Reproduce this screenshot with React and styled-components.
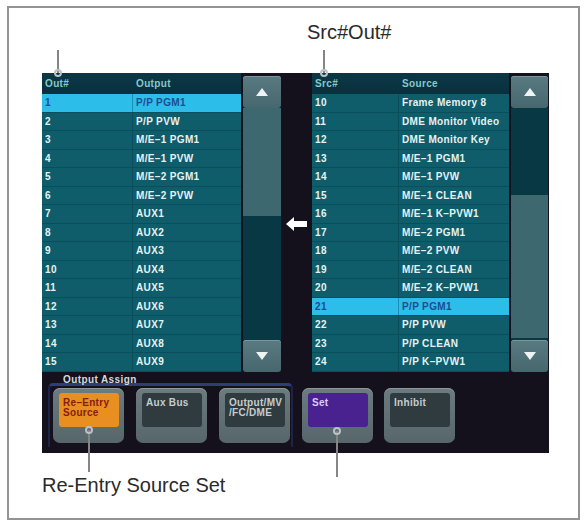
import React from "react";
import styled, { createGlobalStyle } from "styled-components";

const GlobalStyle = createGlobalStyle`
    body {
        margin: 0;
        background: #ffffff;
        font-family: "Liberation Sans", Arial, sans-serif;
    }
`;

const outputs = [
    ["1", "P/P PGM1"],
    ["2", "P/P PVW"],
    ["3", "M/E–1 PGM1"],
    ["4", "M/E–1 PVW"],
    ["5", "M/E–2 PGM1"],
    ["6", "M/E–2 PVW"],
    ["7", "AUX1"],
    ["8", "AUX2"],
    ["9", "AUX3"],
    ["10", "AUX4"],
    ["11", "AUX5"],
    ["12", "AUX6"],
    ["13", "AUX7"],
    ["14", "AUX8"],
    ["15", "AUX9"],
];

const sources = [
    ["10", "Frame Memory 8"],
    ["11", "DME Monitor Video"],
    ["12", "DME Monitor Key"],
    ["13", "M/E–1 PGM1"],
    ["14", "M/E–1 PVW"],
    ["15", "M/E–1 CLEAN"],
    ["16", "M/E–1 K–PVW1"],
    ["17", "M/E–2 PGM1"],
    ["18", "M/E–2 PVW"],
    ["19", "M/E–2 CLEAN"],
    ["20", "M/E–2 K–PVW1"],
    ["21", "P/P PGM1"],
    ["22", "P/P PVW"],
    ["23", "P/P CLEAN"],
    ["24", "P/P K–PVW1"],
];

const keyColors = {
    orange: { bg: "#e98f22", fg: "#861c0c" },
    gray: { bg: "#2f3b3e", fg: "#c4ccd0" },
    purple: { bg: "#4a2290", fg: "#dccdf6" },
};

const ListPanel = ({ head, rows, selected, numWidth, width }) => (
    <List $width={width}>
        <HeaderRow $numWidth={numWidth}>
            <Cell>{head[0]}</Cell>
            <Cell>{head[1]}</Cell>
        </HeaderRow>
        {rows.map(([num, name]) => (
            <Row key={num} $numWidth={numWidth} $selected={num === selected}>
                <Cell className="num">{num}</Cell>
                <Cell>{name}</Cell>
            </Row>
        ))}
    </List>
);

const ScrollBar = ({ width, thumbTop, thumbHeight }) => (
    <Scroll $width={width}>
        <ScrollButton>
            <Triangle />
        </ScrollButton>
        <Track>
            <Thumb $top={thumbTop} $height={thumbHeight} />
        </Track>
        <ScrollButton>
            <Triangle $down />
        </ScrollButton>
    </Scroll>
);

const Key = ({ color = "gray", children }) => (
    <KeyBody>
        <KeyFace $color={color}>{children}</KeyFace>
    </KeyBody>
);

const App = () => {
    return (
        <>
            <GlobalStyle />
            <Page>
                <Frame>
                    <TopCaption>Src#Out#</TopCaption>
                    <Screen>
                        <ListsRow>
                            <ListPanel
                                head={["Out#", "Output"]}
                                rows={outputs}
                                selected="1"
                                numWidth={91}
                                width={199}
                            />
                            <ScrollBar width={38} thumbTop={0} thumbHeight={108} />
                            <Middle>
                                <svg width="21" height="14" viewBox="0 0 21 14">
                                    <polygon
                                        points="0,7 8,0 8,4 21,4 21,10 8,10 8,14"
                                        fill="#ffffff"
                                    />
                                </svg>
                            </Middle>
                            <ListPanel
                                head={["Src#", "Source"]}
                                rows={sources}
                                selected="21"
                                numWidth={87}
                                width={197}
                            />
                            <ScrollBar width={37} thumbTop={87} thumbHeight={143} />
                        </ListsRow>
                        <ButtonRow>
                            <Group>
                                <GroupLabel>Output Assign</GroupLabel>
                                <GroupBox>
                                    <Key color="orange">
                                        Re–Entry
                                        <br />
                                        Source
                                    </Key>
                                    <Key>Aux Bus</Key>
                                    <Key>
                                        Output/MV
                                        <br />
                                        /FC/DME
                                    </Key>
                                </GroupBox>
                            </Group>
                            <SingleKey>
                                <Key color="purple">Set</Key>
                            </SingleKey>
                            <SingleKey>
                                <Key>Inhibit</Key>
                            </SingleKey>
                        </ButtonRow>
                    </Screen>
                    <BottomCaption>Re-Entry Source Set</BottomCaption>
                </Frame>

                <Leader $x={58} $y={50} $h={23} $ring="bottom" />
                <Leader $x={324} $y={50} $h={23} $ring="bottom" />
                <Leader $x={89} $y={430} $h={42} $ring="top" />
                <Leader $x={337} $y={431} $h={46} $ring="top" />
            </Page>
        </>
    );
};

export default App;

const Page = styled.div`
    position: relative;
    width: 584px;
    height: 528px;
    overflow: hidden;
    padding: 6px 0 0 7px;
    box-sizing: border-box;
`;

const Frame = styled.div`
    width: 573px;
    height: 514px;
    box-sizing: border-box;
    border: 2px solid #939393;
    padding: 13px 0 0 33px;
    background: #ffffff;
`;

const TopCaption = styled.div`
    margin-left: 265px;
    height: 23px;
    margin-bottom: 29px;
    font-size: 20px;
    line-height: 23px;
    color: #2a2a2a;
`;

const BottomCaption = styled.div`
    margin-top: 21px;
    font-size: 20px;
    line-height: 23px;
    color: #2a2a2a;
`;

const Screen = styled.div`
    width: 507px;
    height: 380px;
    background: #15111c;
    display: flex;
    flex-direction: column;
`;

const ListsRow = styled.div`
    display: flex;
    height: 299px;
`;

const List = styled.div`
    width: ${(p) => p.$width}px;
    margin-right: 2px;
    display: flex;
    flex-direction: column;
    font-weight: bold;
    font-size: 10px;
    letter-spacing: 0.35px;
`;

const HeaderRow = styled.div`
    display: grid;
    grid-template-columns: ${(p) => p.$numWidth}px 1fr;
    height: 21px;
    align-items: center;
    background: linear-gradient(#0c3846, #08303d);
    color: #86c9cb;
`;

const Row = styled.div`
    display: grid;
    grid-template-columns: ${(p) => p.$numWidth}px 1fr;
    height: 18.5px;
    box-sizing: border-box;
    align-items: center;
    border-bottom: 1px solid #0b4e5b;
    background: ${(p) => (p.$selected ? "#2dbde9" : "#0f5d6b")};
    color: ${(p) => (p.$selected ? "#1b4c92" : "#e6f2f2")};

    .num {
        border-right: 1px solid ${(p) => (p.$selected ? "#1d8fb4" : "#0b4d5a")};
    }
`;

const Cell = styled.span`
    padding-left: 3px;
    height: 100%;
    display: flex;
    align-items: center;
    white-space: nowrap;
`;

const Scroll = styled.div`
    width: ${(p) => p.$width}px;
    padding-top: 3px;
    display: flex;
    flex-direction: column;
`;

const ScrollButton = styled.div`
    height: 32px;
    border-radius: 3px;
    background: linear-gradient(#587a80, #46676e);
    box-shadow: inset 0 1px 0 #7a969b;
    display: flex;
    align-items: center;
    justify-content: center;
`;

const Triangle = styled.div`
    width: 0;
    height: 0;
    border-left: 6px solid transparent;
    border-right: 6px solid transparent;
    ${(p) =>
        p.$down
            ? "border-top: 8px solid #eef3f4;"
            : "border-bottom: 8px solid #eef3f4;"}
`;

const Track = styled.div`
    position: relative;
    flex: 1;
    background: #093845;
`;

const Thumb = styled.div`
    position: absolute;
    left: 0;
    right: 0;
    top: ${(p) => p.$top}px;
    height: ${(p) => p.$height}px;
    background: #3e6870;
`;

const Middle = styled.div`
    width: 31px;
    padding: 144px 0 0 5px;
    box-sizing: border-box;
`;

const ButtonRow = styled.div`
    display: flex;
    align-items: flex-start;
    padding-left: 6px;
    gap: 9px;
`;

const Group = styled.div`
    width: 245px;
    padding-top: 3px;
`;

const GroupLabel = styled.div`
    position: relative;
    z-index: 1;
    height: 10px;
    margin-left: 15px;
    font-size: 10px;
    line-height: 10px;
    font-weight: bold;
    letter-spacing: 0.4px;
    color: #d2dade;
`;

const GroupBox = styled.div`
    margin-top: -2px;
    display: flex;
    gap: 12px;
    border: 2px solid #1e2448;
    border-top: 3px solid #313b7a;
    border-bottom: none;
    border-radius: 5px 5px 0 0;
    padding: 2px 1px 4px 3px;
`;

const SingleKey = styled.div`
    margin-top: 16px;

    & + & {
        margin-left: 2px;
    }
`;

const KeyBody = styled.div`
    width: 71px;
    height: 55px;
    box-sizing: border-box;
    border-radius: 7px;
    padding: 5px 5px 0 6px;
    background: linear-gradient(#6c7b80, #56666b);
    box-shadow: inset 0 1px 0 #8a989c;
`;

const KeyFace = styled.div`
    height: 34px;
    box-sizing: border-box;
    border-radius: 3px;
    padding: 5px 4px 0;
    background: ${(p) => keyColors[p.$color].bg};
    color: ${(p) => keyColors[p.$color].fg};
    font-size: 10px;
    line-height: 10px;
    font-weight: bold;
    letter-spacing: 0.3px;
    white-space: nowrap;
`;

const Leader = styled.div`
    position: absolute;
    left: ${(p) => p.$x - 1}px;
    top: ${(p) => p.$y}px;
    width: 2px;
    height: ${(p) => p.$h}px;
    background: #858585;

    &::after {
        content: "";
        position: absolute;
        left: -3px;
        ${(p) => (p.$ring === "top" ? "top: -4px;" : "bottom: -4px;")}
        width: 4px;
        height: 4px;
        border: 2px solid #b9c2c6;
        border-radius: 50%;
    }
`;
